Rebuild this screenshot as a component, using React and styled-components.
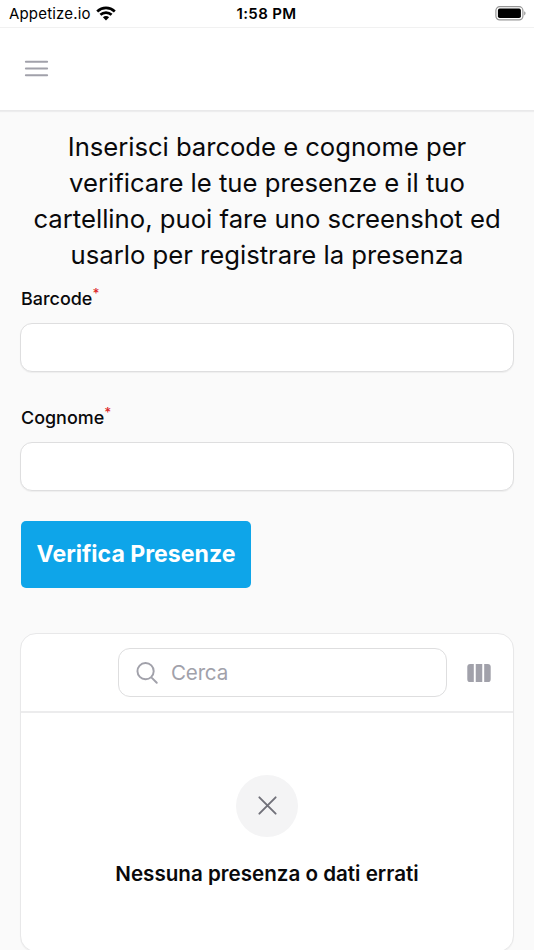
import React from "react";
import styled, { createGlobalStyle } from "styled-components";

const GlobalStyle = createGlobalStyle`
  * { box-sizing: border-box; }
  html, body { margin: 0; background: #fafafa; }
  body { height: 950px; overflow: hidden; font-family: Inter, "Liberation Sans", sans-serif; color: #09090b; }
`;

const Screen = styled.div`
  width: 534px;
  height: 950px;
  overflow: hidden;
  background: #fafafa;
`;

const StatusBar = styled.div`
  display: grid;
  grid-template-columns: 1fr auto 1fr;
  align-items: center;
  height: 27px;
  padding: 0 8px 0 9px;
  background: #fff;
  color: #000;
  font-size: 15px;
  line-height: 27px;
`;

const Carrier = styled.div`
  display: flex;
  align-items: center;
  gap: 5px;
  letter-spacing: 0.17px;
`;

const Clock = styled.div`
  font-weight: 600;
  letter-spacing: 0.35px;
  padding-right: 2px;
`;

const BatterySlot = styled.div`
  display: flex;
  justify-content: flex-end;
`;

const TopBar = styled.header`
  display: flex;
  align-items: center;
  height: 84px;
  padding: 0 0 2px 21px;
  background: #fff;
  border-top: 1px solid #f1f1f1;
  border-bottom: 1px solid #e9e9ea;
  box-shadow: 0 1px 1px rgba(9, 9, 11, 0.05);
`;

const Icon = styled.svg`
  display: block;
  flex: none;
`;

const Main = styled.main`
  padding: 18px 20px 0;
`;

const Intro = styled.h1`
  height: 144px;
  margin: 0;
  text-align: center;
  white-space: nowrap;
  font-size: 25.7px;
  font-weight: 400;
  line-height: 36px;
`;

const IntroLine = styled.span`
  display: block;
  letter-spacing: ${(p) => p.$tracking || 0}px;
`;

const Field = styled.div`
  display: flex;
  flex-direction: column;
  gap: 11px;
  margin-top: ${(p) => p.$top}px;
`;

const Label = styled.label`
  height: 26px;
  padding-left: 1px;
  font-size: 17.95px;
  font-weight: 500;
  line-height: 26px;
`;

const Required = styled.sup`
  color: #dc2626;
  font-size: 13.5px;
  line-height: 0;
  vertical-align: 7.5px;
`;

const TextInput = styled.input`
  display: block;
  width: 100%;
  height: 49px;
  padding: 0 16px;
  border: 1.3px solid #dededf;
  border-radius: 12px;
  background: #fff;
  box-shadow: 0 1px 1px rgba(9, 9, 11, 0.05);
  font: 20.6px Inter, sans-serif;
`;

const SubmitButton = styled.button`
  display: block;
  width: 230px;
  height: 67px;
  margin: 30px 0 0 1px;
  padding: 0;
  border: 0;
  border-radius: 5px;
  background: #0ea5e9;
  color: #fff;
  white-space: nowrap;
  font: 700 23.1px/67px Inter, sans-serif;
`;

const Card = styled.section`
  height: 319px;
  margin-top: 45px;
  border: 1px solid #e8e8e9;
  border-radius: 16px;
  background: #fff;
  box-shadow: 0 1px 1px rgba(9, 9, 11, 0.04);
`;

const Toolbar = styled.div`
  display: flex;
  align-items: center;
  justify-content: flex-end;
  gap: 19px;
  height: 79px;
  padding: 0 21px 0 0;
  border-bottom: 2px solid #ececed;
`;

const SearchBox = styled.div`
  display: flex;
  align-items: center;
  gap: 11px;
  width: 329px;
  height: 49px;
  padding-left: 15px;
  border: 1.3px solid #dededf;
  border-radius: 12px;
`;

const SearchInput = styled.input`
  width: 240px;
  padding: 0;
  border: 0;
  outline: 0;
  background: none;
  font: 20.6px/30px Inter, sans-serif;
  letter-spacing: -0.2px;
  &::placeholder { color: #a1a1aa; opacity: 1; }
`;

const ColumnsButton = styled.button`
  padding: 0;
  border: 0;
  background: none;
`;

const EmptyState = styled.div`
  display: flex;
  flex-direction: column;
  align-items: center;
  gap: 21px;
  padding-top: 62px;
`;

const EmptyBadge = styled.div`
  display: flex;
  align-items: center;
  justify-content: center;
  width: 62px;
  height: 62px;
  padding-bottom: 1px;
  border-radius: 50%;
  background: #f4f4f5;
`;

const EmptyTitle = styled.h2`
  margin: 0;
  font-size: 20.6px;
  font-weight: 600;
  line-height: 31px;
  white-space: nowrap;
`;

const WifiIcon = () => (
  <Icon width="20" height="16" viewBox="0 0 20 16">
    <g fill="none" stroke="#000" strokeWidth="2.7">
      <path d="M1.2 5.4C6.2.8 13.8.8 18.8 5.4" />
      <path d="M4.4 8.7C7.6 5.8 12.4 5.8 15.6 8.7" />
    </g>
    <path d="M6.9 11.2c1.8-1.5 4.4-1.5 6.2 0L10 14.4z" />
  </Icon>
);

const BatteryIcon = () => (
  <Icon width="31" height="15" viewBox="0 0 31 15">
    <rect x="0.9" y="0.7" width="27" height="13.2" rx="3.8" fill="#fff" stroke="#969696" strokeWidth="1.2" />
    <rect x="2.9" y="2.6" width="23" height="9.4" rx="1.8" />
    <path d="M29.2 5.2c1.8.7 1.8 3.5 0 4.2z" fill="#969696" />
  </Icon>
);

const MenuIcon = () => (
  <Icon width="31" height="31" viewBox="0 0 24 24" fill="none" stroke="#a1a1aa" strokeWidth="1.5" strokeLinecap="round">
    <path d="M3.75 6.75h16.5M3.75 12h16.5M3.75 17.25h16.5" />
  </Icon>
);

const SearchIcon = () => (
  <Icon width="26" height="26" viewBox="0 0 24 24" fill="none" stroke="#a1a1aa" strokeWidth="1.8" strokeLinecap="round">
    <path d="m21 21-5.2-5.2m0 0A7.5 7.5 0 1 0 5.2 5.2a7.5 7.5 0 0 0 10.6 10.6z" />
  </Icon>
);

const ColumnsIcon = () => (
  <Icon width="26" height="26" viewBox="0 0 20 20" fill="#a1a1aa">
    <path d="M14 17h2.75A2.25 2.25 0 0 0 19 14.75v-9.5A2.25 2.25 0 0 0 16.75 3H14v14ZM12.5 3h-5v14h5V3ZM3.25 3H6v14H3.25A2.25 2.25 0 0 1 1 14.75v-9.5A2.25 2.25 0 0 1 3.25 3Z" />
  </Icon>
);

const CloseIcon = () => (
  <Icon width="31" height="31" viewBox="0 0 24 24" fill="none" stroke="#71717a" strokeWidth="1.5" strokeLinecap="round">
    <path d="M5.7 18.3 18.3 5.7M5.7 5.7l12.6 12.6" />
  </Icon>
);

export default function App() {
  return (
    <Screen>
      <GlobalStyle />
      <StatusBar>
        <Carrier>Appetize.io <WifiIcon /></Carrier>
        <Clock>1:58 PM</Clock>
        <BatterySlot><BatteryIcon /></BatterySlot>
      </StatusBar>
      <TopBar><MenuIcon /></TopBar>
      <Main>
        <Intro>
          <IntroLine $tracking={-0.05}>Inserisci barcode e cognome per</IntroLine>
          <IntroLine $tracking={-0.02}>verificare le tue presenze e il tuo</IntroLine>
          <IntroLine>cartellino, puoi fare uno screenshot ed</IntroLine>
          <IntroLine $tracking={-0.02}>usarlo per registrare la presenza</IntroLine>
        </Intro>
        <Field $top={13}>
          <Label htmlFor="barcode">Barcode<Required>*</Required></Label>
          <TextInput id="barcode" />
        </Field>
        <Field $top={33}>
          <Label htmlFor="cognome">Cognome<Required>*</Required></Label>
          <TextInput id="cognome" />
        </Field>
        <SubmitButton>Verifica Presenze</SubmitButton>
        <Card>
          <Toolbar>
            <SearchBox>
              <SearchIcon />
              <SearchInput placeholder="Cerca" />
            </SearchBox>
            <ColumnsButton><ColumnsIcon /></ColumnsButton>
          </Toolbar>
          <EmptyState>
            <EmptyBadge><CloseIcon /></EmptyBadge>
            <EmptyTitle>Nessuna presenza o dati errati</EmptyTitle>
          </EmptyState>
        </Card>
      </Main>
    </Screen>
  );
}
